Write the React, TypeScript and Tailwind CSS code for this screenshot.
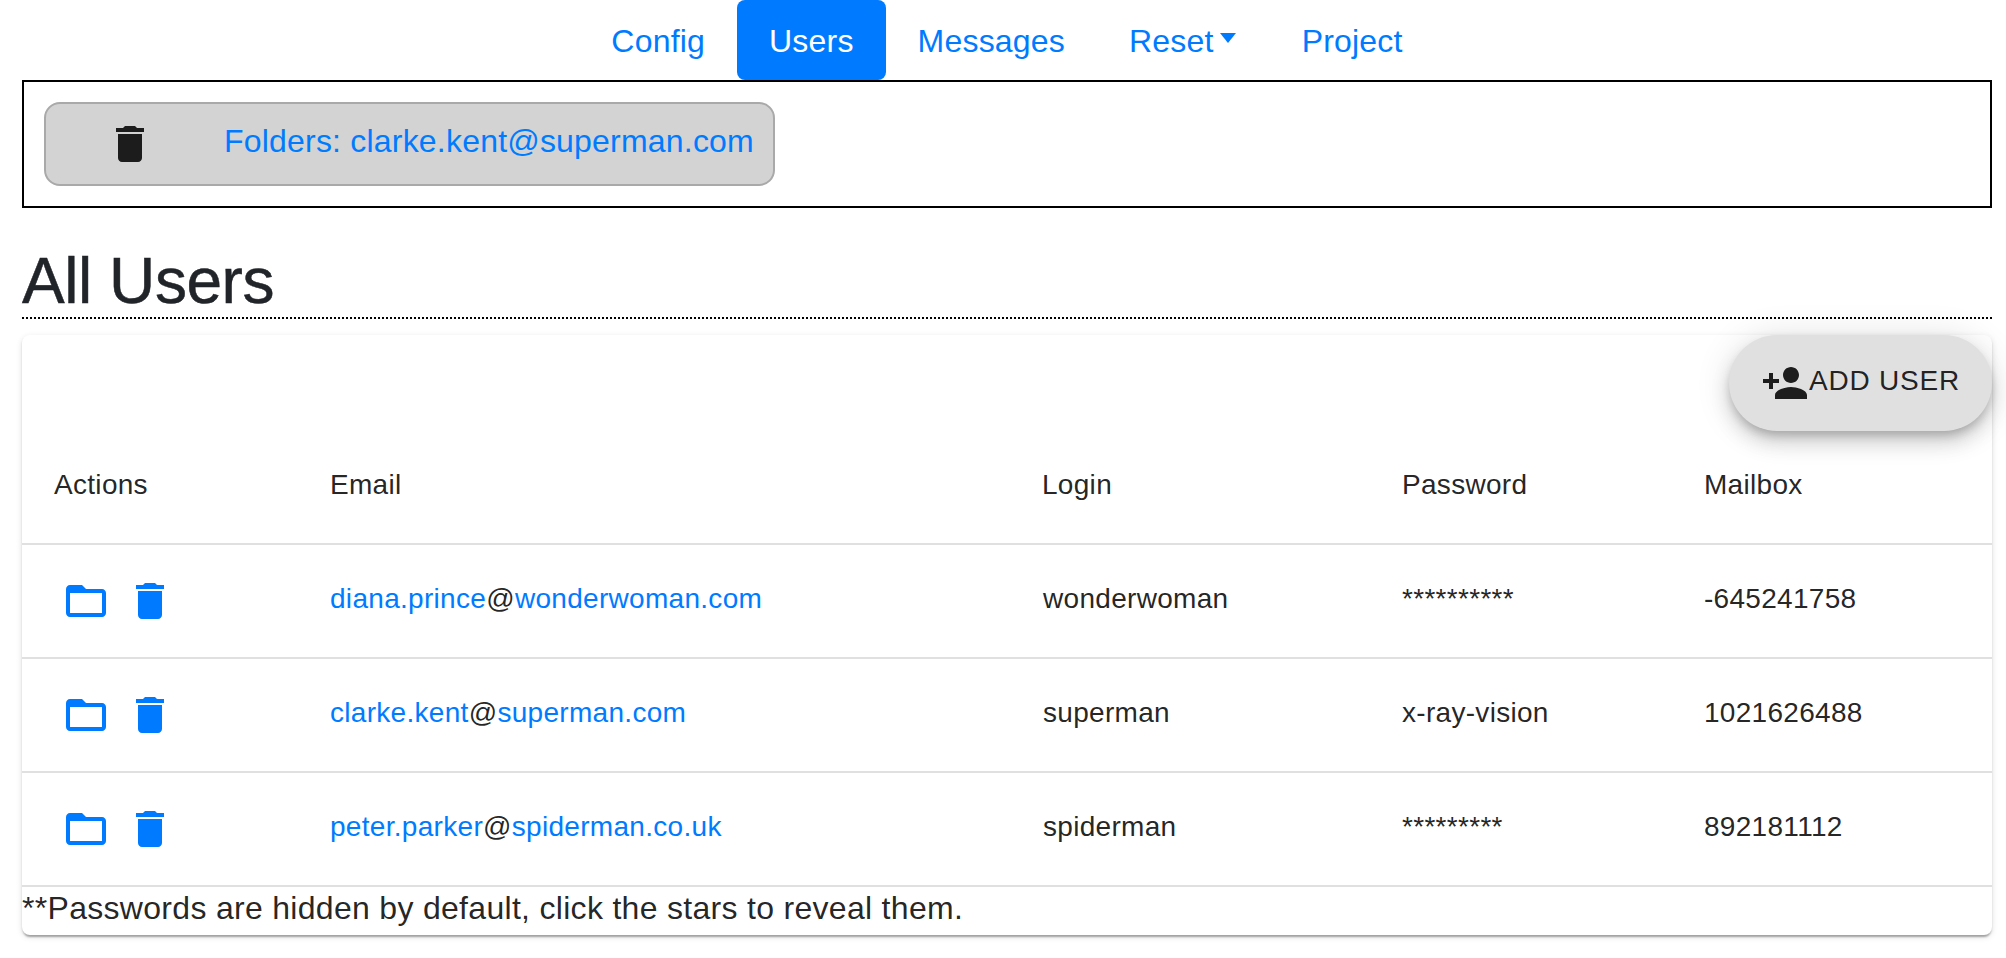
import type { ReactNode } from 'react';

const FONT = "font-['Liberation_Sans',Arial,sans-serif]";

const trashPath = 'M6 19c0 1.1.9 2 2 2h8c1.1 0 2-.9 2-2V7H6v12zM19 4h-3.5l-1-1h-5l-1 1H5v2h14V4z';
const folderPath =
  'M20 6h-8l-2-2H4c-1.1 0-1.99.9-1.99 2L2 18c0 1.1.9 2 2 2h16c1.1 0 2-.9 2-2V8c0-1.1-.9-2-2-2zm0 12H4V8h16v10z';
const personAddPath =
  'M15 12c2.21 0 4-1.79 4-4s-1.79-4-4-4-4 1.79-4 4 1.79 4 4 4zm-9-2V7H4v3H1v2h3v3h2v-3h3v-2H6zm9 4c-2.67 0-8 1.34-8 4v2h16v-2c0-2.66-5.33-4-8-4z';

function Icon({ d, className }: { d: string; className?: string }) {
  return (
    <svg viewBox="0 0 24 24" fill="currentColor" className={`w-12 h-12 shrink-0 ${className ?? ''}`}>
      <path d={d} />
    </svg>
  );
}

type User = { local: string; domain: string; login: string; password: string; mailbox: string };

const users: User[] = [
  { local: 'diana.prince', domain: 'wonderwoman.com', login: 'wonderwoman', password: '**********', mailbox: '-645241758' },
  { local: 'clarke.kent', domain: 'superman.com', login: 'superman', password: 'x-ray-vision', mailbox: '1021626488' },
  { local: 'peter.parker', domain: 'spiderman.co.uk', login: 'spiderman', password: '*********', mailbox: '892181112' },
];

function NavLink({ children, active }: { children: ReactNode; active?: boolean }) {
  return (
    <a
      className={`block h-20 px-8 pt-[17px] rounded-lg text-[32px] leading-[48px] tracking-[0.2px] ${
        active ? 'bg-[#007bff] text-white' : 'text-[#007bff]'
      }`}
    >
      {children}
    </a>
  );
}

export default function App() {
  return (
    <div className={`${FONT} min-h-[958px] bg-white text-[#212529] pl-[22px] pr-[14px]`}>
      {/* Nav */}
      <nav className="flex justify-center h-20">
        <NavLink>Config</NavLink>
        <NavLink active>Users</NavLink>
        <NavLink>Messages</NavLink>
        <NavLink>
          <span className="flex items-center">
            Reset
            <span className="ml-[6px] mr-[2px] mt-[-6px] border-x-[8px] border-x-transparent border-t-[10px] border-t-[#007bff]" />
          </span>
        </NavLink>
        <NavLink>Project</NavLink>
      </nav>

      {/* Folder tabs */}
      <div className="h-[128px] border-2 border-black pt-5 pl-5">
        <div className="flex items-center w-[731px] h-[84px] bg-[#d3d3d3] border-2 border-[#a9a9a9] rounded-2xl">
          <Icon d={trashPath} className="ml-[60px] text-[#1c1c1c]" />
          <a className="ml-[70px] mb-[6px] text-[32px] leading-[48px] tracking-[0.2px] text-[#007bff] whitespace-nowrap">
            Folders: clarke.kent@superman.com
          </a>
        </div>
      </div>

      <h2 className="h-[111px] pt-[37px] text-[64px] leading-[72px] tracking-[-0.45px] [-webkit-text-stroke:0.5px] font-normal text-[#212529] border-b-2 border-dotted border-black">
        All Users
      </h2>

      {/* Users card */}
      <div className="mt-4 h-[600px] bg-white rounded-lg shadow-[0_4px_2px_-2px_rgba(0,0,0,0.2),0_2px_2px_0_rgba(0,0,0,0.14),0_2px_6px_0_rgba(0,0,0,0.12)] text-[rgba(0,0,0,0.87)]">
        <div className="flex justify-end h-24">
          <button className="flex items-center h-24 px-8 rounded-full bg-[#e0e0e0] text-[28px] leading-[40px] tracking-[0.8px] text-[rgba(0,0,0,0.87)] shadow-[0_6px_10px_-2px_rgba(0,0,0,0.2),0_12px_20px_0_rgba(0,0,0,0.14),0_2px_36px_0_rgba(0,0,0,0.12)]">
            <Icon d={personAddPath} />
            <span className="mb-1">ADD USER</span>
          </button>
        </div>

        <table className="w-full table-fixed border-collapse text-[28px] leading-[40px] tracking-[0.3px]">
          <colgroup>
            <col className="w-[276px]" />
            <col className="w-[712px]" />
            <col className="w-[360px]" />
            <col className="w-[302px]" />
            <col className="w-[320px]" />
          </colgroup>
          <thead>
            <tr className="h-[113px] border-b-2 border-[#e0e0e0]">
              <th className="pl-8 pb-1 text-left font-normal">Actions</th>
              <th className="pl-8 pb-1 text-left font-normal">Email</th>
              <th className="pl-8 pb-1 text-left font-normal">Login</th>
              <th className="pl-8 pb-1 text-left font-normal">Password</th>
              <th className="pl-8 pb-1 text-left font-normal">Mailbox</th>
            </tr>
          </thead>
          <tbody>
            {users.map((u) => (
              <tr key={u.login} className="h-[114px] border-b-2 border-[#e0e0e0]">
                <td className="pl-10">
                  <div className="flex gap-4 text-[#007bff]">
                    <Icon d={folderPath} />
                    <Icon d={trashPath} />
                  </div>
                </td>
                <td className="pl-8 pb-1">
                  <a className="text-[#007bff]">{u.local}</a>@<a className="text-[#007bff]">{u.domain}</a>
                </td>
                <td className="pl-[33px] pb-1">{u.login}</td>
                <td className="pl-8 pb-1">{u.password}</td>
                <td className="pl-8 pb-1">{u.mailbox}</td>
              </tr>
            ))}
          </tbody>
        </table>
        <p className="text-[32px] leading-[42px] tracking-[0.3px]">**Passwords are hidden by default, click the stars to reveal them.</p>
      </div>
    </div>
  );
}
